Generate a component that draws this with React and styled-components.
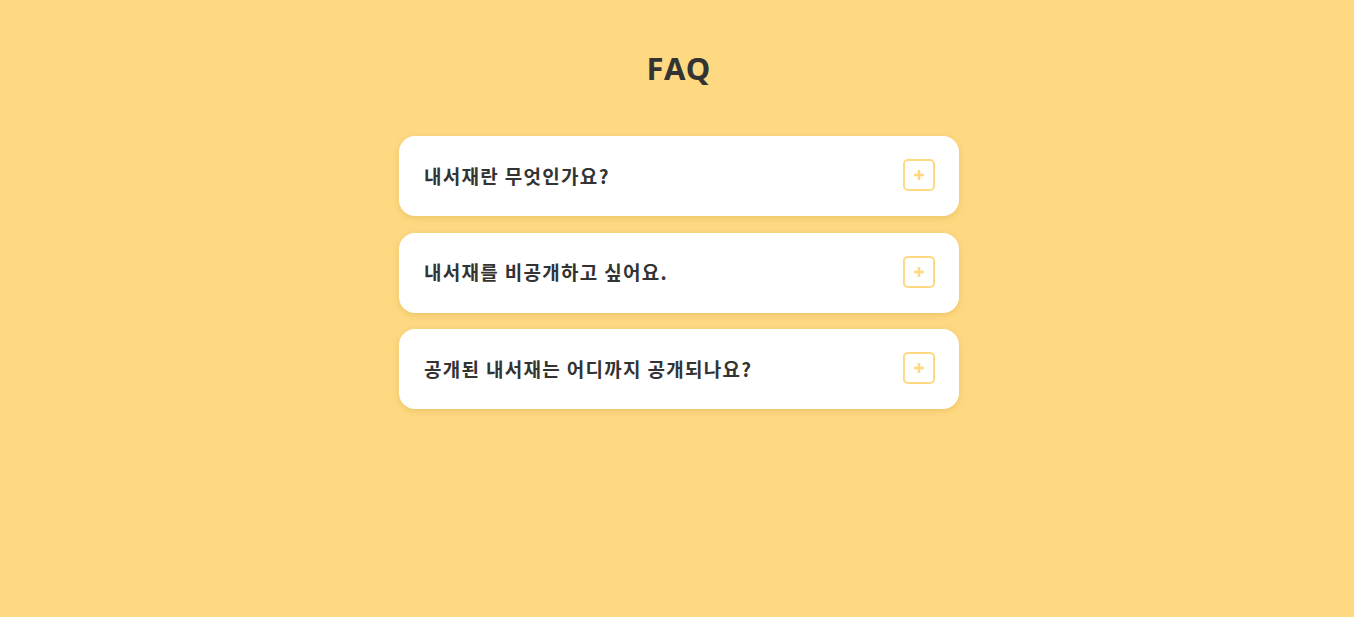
import React from 'react';
import styled, { createGlobalStyle } from 'styled-components';

const GlobalStyle = createGlobalStyle`
  html, body {
    margin: 0;
    padding: 0;
    background: #fed982;
  }
  body {
    font-family: "Noto Sans", "Noto Sans CJK KR", sans-serif;
    color: #333;
  }
`;

const Page = styled.main`
  min-height: 617px;
  display: flex;
  flex-direction: column;
  align-items: center;
  padding: 46px 0 0 4px;
  box-sizing: border-box;
`;

const Title = styled.h1`
  margin: 0 0 46px;
  font-size: 31px;
  line-height: 44px;
  font-weight: 700;
  letter-spacing: 1px;
  color: #333;
`;

const List = styled.ul`
  list-style: none;
  margin: 0;
  padding: 0;
  width: 560px;
  display: flex;
  flex-direction: column;
  gap: 16.5px;
`;

const Item = styled.li`
  height: 80px;
  box-sizing: border-box;
  background: #fff;
  border-radius: 16px;
  box-shadow: 0 2px 6px rgba(214, 170, 70, 0.45);
  display: flex;
  align-items: center;
  justify-content: space-between;
  padding: 0 24px 2px 25px;
`;

const Question = styled.span`
  font-family: "Noto Sans CJK KR", "Noto Sans", sans-serif;
  font-size: 19px;
  font-weight: 700;
  letter-spacing: 1.3px;
  color: #333;
`;

const ToggleButton = styled.button`
  width: 32px;
  height: 32px;
  box-sizing: border-box;
  border: 2px solid #fed982;
  border-radius: 5px;
  background: #fff;
  padding: 0;
  display: flex;
  align-items: center;
  justify-content: center;
  cursor: pointer;
`;

const Plus = () => (
  <svg width="12" height="12" viewBox="0 0 12 12">
    <path d="M6 1v10M1 6h10" stroke="#fed982" strokeWidth="2.6" />
  </svg>
);

const questions = [
  '내서재란 무엇인가요?',
  '내서재를 비공개하고 싶어요.',
  '공개된 내서재는 어디까지 공개되나요?',
];

const App = () => (
  <>
    <GlobalStyle />
    <Page>
      <Title>FAQ</Title>
      <List>
        {questions.map(q => (
          <Item key={q}>
            <Question>{q}</Question>
            <ToggleButton aria-label="열기">
              <Plus />
            </ToggleButton>
          </Item>
        ))}
      </List>
    </Page>
  </>
);

export default App;
